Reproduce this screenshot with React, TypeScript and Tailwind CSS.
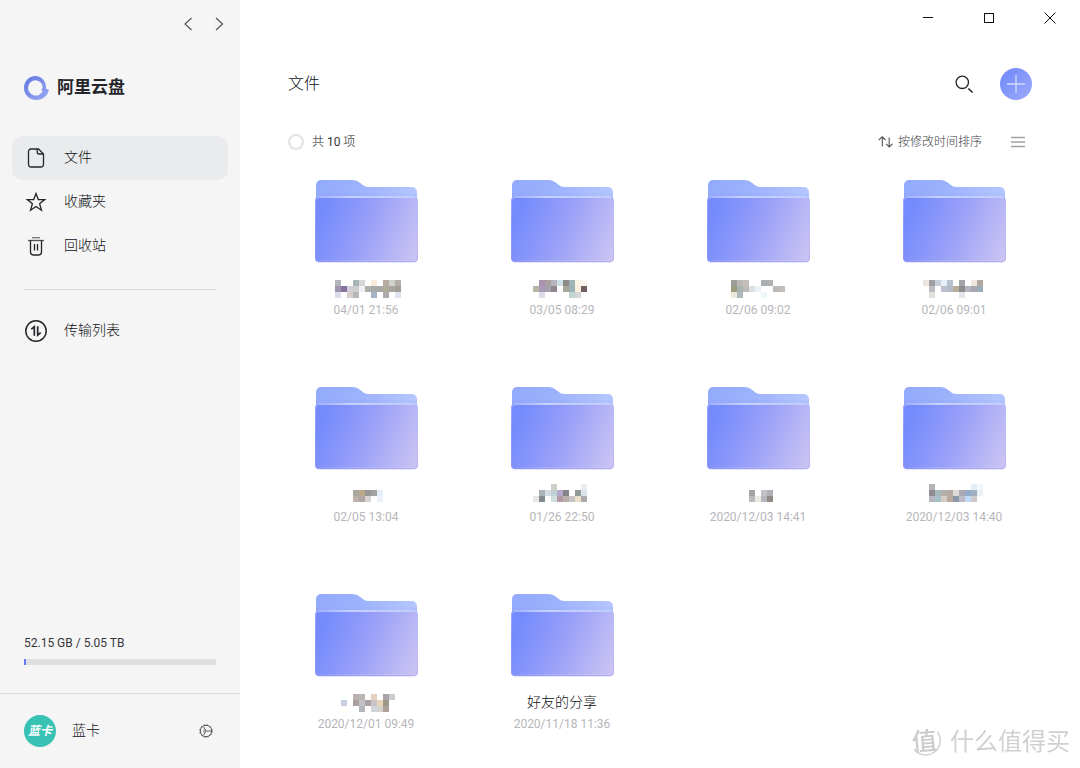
import type { ReactNode } from "react";

type Mosaic = { x: number; y: number; rows: (string | null)[][] };
type Item = { date: string; name?: string; mosaic?: Mosaic };

const _ = null;

const items: Item[] = [
  {
    date: "04/01 21:56",
    mosaic: {
      x: 29,
      y: 4,
      rows: [
        ["#b3b3ba", _, _, "#a9b4b9", "#d9d7d6", _, "#f9eadb", _, "#b8aaa3", "#cfd2c9", "#b5aeab"],
        ["#a195b0", "#8a72a0", "#cfcdd8", "#cdcdcd", "#f0f0f8", "#b0aeab", "#a7aaaa", "#a7a8a5", "#aeae9d", "#a9a49f", "#a39c99"],
        ["#dcdde8", _, "#d8cecd", "#b7b6b8", _, _, "#a4b4c4", _, "#b0a9ae", _, "#dfe5ef"],
      ],
    },
  },
  {
    date: "03/05 08:29",
    mosaic: {
      x: 31,
      y: 4,
      rows: [
        [_, "#aa92ad", "#aaa0a2", "#b8b4bd", "#cfdfe9", "#8c8b88", "#9eb4b7", "#fbf3e4", "#fbf5eb"],
        ["#b8b5a6", "#a99aba", "#a6a1af", "#8f858f", _, "#a7a69c", "#9bb3b6", "#fceedb", "#6d6060"],
        [_, "#dfdbe6", _, _, _, _, "#c4d3d6", "#d6d6d6", _],
      ],
    },
  },
  {
    date: "02/06 09:02",
    mosaic: {
      x: 33,
      y: 4,
      rows: [
        ["#9c9e97", "#bcb6b7", "#c5bfba", _, _, "#abaeb1", "#aeb0b1", _, _],
        ["#9c9c80", "#a7b3af", "#bcbcbd", "#dedfe0", "#eaf4f7", _, _, "#bcb9b7", "#c1bebc"],
        ["#ebe8dc", "#adb9ba", _, _, _, "#eff8fa", _, _, _],
      ],
    },
  },
  {
    date: "02/06 09:01",
    mosaic: {
      x: 29,
      y: 4,
      rows: [
        ["#ede5e0", "#a09da3", "#c6ced9", "#e4eff8", "#b8c2cc", _, "#a3a5a7", _, "#eee8e0", "#b0a79e"],
        [_, "#bdbcc1", _, "#bec1cb", "#b6bcc7", "#b9ad99", "#8d8d8e", "#b3b4bd", "#a6a9b3", "#9aadbd"],
        [_, "#e3dfdc", _, _, _, _, "#e4e6ea", _, _, _],
      ],
    },
  },
  {
    date: "02/05 13:04",
    mosaic: {
      x: 47,
      y: 7,
      rows: [
        ["#aaa9a0", "#bba98b", "#989793", "#a3a3a3", "#e6eef9"],
        ["#bdb0aa", "#afa6a4", "#d8d3d4", _, "#edf3fa"],
      ],
    },
  },
  {
    date: "01/26 22:50",
    mosaic: {
      x: 31,
      y: 1,
      rows: [
        [_, _, _, "#cdcfc9", _, _, _, _, "#e6ecef"],
        [_, "#aab3b8", "#d3dce1", "#c1d2d4", "#b6a8c9", "#858589", _, "#929b96", "#dce5ec"],
        ["#eae7e4", "#818a90", _, "#d3dfdd", "#b49aa6", "#b9b2ac", "#c9c4c4", "#eee0cc", "#adaaae"],
      ],
    },
  },
  {
    date: "2020/12/03 14:41",
    mosaic: {
      x: 51,
      y: 7,
      rows: [
        ["#a3a2a4", _, "#c2c2c9", "#b0b0b6"],
        ["#bbb9bf", "#ebece1", "#b5b5bd", "#908985"],
      ],
    },
  },
  {
    date: "2020/12/03 14:40",
    mosaic: {
      x: 35,
      y: 1,
      rows: [
        ["#b5b3b7", _, _, _, _, _, _, "#e5eef4", "#eff7fb"],
        ["#908b8c", "#a5b8bd", "#b2b0ab", "#b5aaa1", "#ded9d7", "#aba9b1", "#93abc9", "#a2afbf", "#e8f2f8"],
        ["#b8b7c0", "#a7bfc6", "#d5cdc5", "#b8a99a", "#8998aa", "#bcbac7", "#c0daf3", "#ccc9cb", _],
      ],
    },
  },
  {
    date: "2020/12/01 09:49",
    mosaic: {
      x: 35,
      y: 4,
      rows: [
        [_, _, "#bcb3b0", "#b8b7b5", _, "#e5d2bd", _, "#aca2aa", "#c9cdd2"],
        ["#c8d0df", _, "#aaa19f", "#c5c3ca", "#a9a1a4", "#c9c5c6", "#e8d4b8", "#999a8a", _],
        [_, _, _, "#b3b5bd", _, "#d1d5dc", "#d7d1cd", "#ada297", _],
      ],
    },
  },
  { date: "2020/11/18 11:36", name: "好友的分享" },
];

function Folder() {
  return (
    <svg width="104" height="84" viewBox="0 0 104 84" aria-hidden="true">
      <path
        d="M2 30V5a5 5 0 0 1 5-5H37.500c4 0 6.500 1 9.500 3.500C49.500 5.800 51 7 54.500 7H98a5 5 0 0 1 5 5v18z"
        fill="url(#folderBack)"
      />
      <rect x="2" y="13" width="101" height="5" fill="#7d8df8" opacity=".08" />
      <rect x="2" y="18" width="101" height="65" rx="4" fill="#b9b4ee" opacity=".35" />
      <rect x="1" y="17" width="103" height="65" rx="4" fill="url(#folderFront)" />
      <rect x="1.500" y="17.500" width="102" height="64" rx="3.500" fill="none" stroke="url(#folderEdge)" />
      <path d="M4 17h97" stroke="url(#folderShine)" strokeWidth="1.200" />
      <path d="M5 80.500h95" stroke="url(#folderShine)" strokeWidth="1" opacity=".2" />
    </svg>
  );
}

function FolderPaints() {
  return (
    <svg width="0" height="0" className="absolute" aria-hidden="true">
      <defs>
        <linearGradient id="folderBack" x1="0" y1="0" x2="1" y2="0.200">
          <stop offset="0" stopColor="#93a9fc" />
          <stop offset=".5" stopColor="#9db3fc" />
          <stop offset="1" stopColor="#b4c6fd" />
        </linearGradient>
        <linearGradient id="folderFront" gradientUnits="userSpaceOnUse" x1="8" y1="34" x2="102" y2="72">
          <stop offset="0" stopColor="#758bfd" />
          <stop offset=".45" stopColor="#989ff8" />
          <stop offset="1" stopColor="#c9c2f3" />
        </linearGradient>
        <linearGradient id="folderEdge" x1="0" y1="0" x2="0" y2="1">
          <stop offset="0" stopColor="#b4c3ff" stopOpacity=".6" />
          <stop offset=".5" stopColor="#a8b4fb" stopOpacity=".3" />
          <stop offset="1" stopColor="#9b9cf0" stopOpacity=".5" />
        </linearGradient>
        <linearGradient id="folderShine" gradientUnits="userSpaceOnUse" x1="0" y1="0" x2="104" y2="0">
          <stop offset="0" stopColor="#dbe4ff" stopOpacity=".2" />
          <stop offset=".35" stopColor="#f0f4ff" />
          <stop offset="1" stopColor="#e3eaff" stopOpacity=".6" />
        </linearGradient>
      </defs>
    </svg>
  );
}

function BlurredName({ mosaic }: { mosaic: Mosaic }) {
  return (
    <svg width="120" height="24" shapeRendering="crispEdges" role="img" aria-label="隐藏的名称">
      {mosaic.rows.map((row, r) =>
        row.map((fill, c) =>
          fill ? (
            <rect key={`${r}-${c}`} x={mosaic.x + c * 6} y={mosaic.y + r * 6} width="6" height="6" fill={fill} />
          ) : null,
        ),
      )}
    </svg>
  );
}

function FileCard({ item }: { item: Item }) {
  return (
    <li className="flex flex-col items-center">
      <Folder />
      <div className="mt-3 flex h-6 items-center text-sm text-[#0f1014]">
        {item.mosaic ? <BlurredName mosaic={item.mosaic} /> : item.name}
      </div>
      <time className="text-xs leading-5 font-normal text-[#b6b6ba]">{item.date}</time>
    </li>
  );
}

function NavItem({ icon, label, active = false }: { icon: ReactNode; label: string; active?: boolean }) {
  return (
    <a
      href="#"
      aria-current={active ? "page" : undefined}
      className={
        active
          ? "flex h-11 items-center gap-4 rounded-[10px] bg-[#eaebed] px-3 text-sm"
          : "flex h-11 items-center gap-4 rounded-[10px] px-3 text-sm"
      }
    >
      {icon}
      <span className="pb-0.5">{label}</span>
    </a>
  );
}

const iconProps = {
  width: 24,
  height: 24,
  viewBox: "0 0 24 24",
  fill: "none",
  stroke: "#25262b",
  strokeWidth: 1.3,
  "aria-hidden": true,
} as const;

const FileIcon = () => (
  <svg {...iconProps}>
    <path d="M7 3h7.500l5 5v10.500a2.500 2.500 0 0 1-2.500 2.500H7a2.500 2.500 0 0 1-2.500-2.500v-13A2.500 2.500 0 0 1 7 3z" />
    <path d="M13.200 3v3a2 2 0 0 0 2 2h4.200" />
  </svg>
);

const StarIcon = () => (
  <svg {...iconProps}>
    <path d="m12 3.600 2.300 6h6.400l-5.100 4.100 1.900 6.600-5.500-3.800-5.500 3.800 1.900-6.600-5.100-4.100h6.400z" />
  </svg>
);

const TrashIcon = () => (
  <svg {...iconProps}>
    <path d="M8 3.700h8" stroke="#777" />
    <path d="M4 6.500h16" stroke="#555" />
    <path d="M6.500 6.500v11.500a3 3 0 0 0 3 3h5a3 3 0 0 0 3-3V6.500M10.500 10v6.500M13.500 10v6.500" />
  </svg>
);

const TransferIcon = () => (
  <svg {...iconProps}>
    <circle cx="12" cy="12" r="10.200" strokeWidth="1.500" />
    <path d="M7.300 10.200 10.300 7.800v9M13.700 7.200v8.900l3-2.500" strokeWidth="1.700" />
  </svg>
);

export default function App() {
  return (
    <div className="flex min-h-screen bg-white font-[Roboto,'Noto_Sans_CJK_SC',sans-serif] font-light text-[#0f1014]">
      <FolderPaints />
      <aside className="flex w-60 shrink-0 flex-col bg-[#f5f5f5]">
        <div className="flex h-12 items-center justify-end gap-[15px] pr-[13px]">
          <button type="button" aria-label="后退">
            <svg width="16" height="16" fill="none" stroke="#555" strokeWidth="1.200">
              <path d="M11.500 2 5 8l6.500 6" />
            </svg>
          </button>
          <button type="button" aria-label="前进">
            <svg width="16" height="16" fill="none" stroke="#555" strokeWidth="1.200">
              <path d="m5 2 6.500 6L5 14" />
            </svg>
          </button>
        </div>

        <div className="flex h-20 items-center gap-2 pl-6">
          <svg width="25" height="24" viewBox="0 0 25 24" aria-hidden="true">
            <defs>
              <linearGradient id="brand" x1="0" y1="0" x2="1" y2="1">
                <stop offset="0" stopColor="#5f76e0" />
                <stop offset="1" stopColor="#9dabf5" />
              </linearGradient>
            </defs>
            <path
              fill="url(#brand)"
              fillRule="evenodd"
              d="M22 12.300C22.400 5 17.500 0 11.500 0 5 0 0 5.200 0 12c0 6.800 5.300 12 12.300 12C19 24 24 19.800 25 13.300c-1 .4-2 .3-3-1zM11.500 4.200a7.500 7.500 0 0 1 7.200 7.800l-1.100 1.100c-.2 1.200.4 1.800 1.100 2.100a7.700 7.700 0 1 1-7.200-11z"
            />
          </svg>
          <span className="text-[17px] font-bold text-[#25262b]">阿里云盘</span>
        </div>

        <nav className="mt-2 px-3">
          <NavItem icon={<FileIcon />} label="文件" active />
          <NavItem icon={<StarIcon />} label="收藏夹" />
          <NavItem icon={<TrashIcon />} label="回收站" />
          <hr className="mx-3 mt-[21px] mb-[19px] border-[#dcdcde]" />
          <NavItem icon={<TransferIcon />} label="传输列表" />
        </nav>

        <div className="mt-auto mb-7 px-6">
          <p id="quota" className="text-xs leading-5 font-normal text-[#35363b]">
            52.15 GB / 5.05 TB
          </p>
          <div
            role="progressbar"
            aria-labelledby="quota"
            aria-valuenow={1}
            aria-valuemin={0}
            aria-valuemax={100}
            className="mt-1.5 h-1.5 bg-[#dfdfdf]"
          >
            <div className="h-full bg-[#637dff]" style={{ width: `${(52.15 / 5171.2) * 100}%` }} />
          </div>
        </div>

        <footer className="flex h-[75px] items-center border-t border-[#dcdcde] px-6">
          <span className="flex size-8 items-center justify-center rounded-full bg-[#37c2b4] text-[12px] font-bold text-white italic">
            蓝卡
          </span>
          <span className="ml-4 pb-0.5 text-sm">蓝卡</span>
          <button type="button" aria-label="设置" className="ml-auto">
            <svg width="20" height="20" viewBox="0 0 20 20" fill="none" stroke="#555" strokeWidth="1">
              <circle cx="10" cy="10" r="5.700" />
              <circle cx="10" cy="10" r="6.300" strokeDasharray="1.650 1.650" strokeWidth=".8" />
              <path d="M7.800 6 10 10l-2.200 4M10 10h6.200M8 8.500v3" strokeWidth=".9" />
            </svg>
          </button>
        </footer>
      </aside>

      <main className="flex min-w-0 flex-1 flex-col">
        <div className="flex h-9 items-center justify-end gap-[45px] pr-[22px]">
          <button type="button" aria-label="最小化">
            <svg width="16" height="16" stroke="#111" shapeRendering="crispEdges">
              <path d="M3 7.500h10" />
            </svg>
          </button>
          <button type="button" aria-label="最大化">
            <svg width="16" height="16" fill="none" stroke="#111" shapeRendering="crispEdges">
              <path d="M3.500 3.500h9v9h-9z" />
            </svg>
          </button>
          <button type="button" aria-label="关闭">
            <svg width="16" height="16" stroke="#111" strokeWidth="1">
              <path d="m2.500 2.500 11 11M13.500 2.500l-11 11" />
            </svg>
          </button>
        </div>

        <header className="flex h-24 items-center px-12">
          <h1 className="text-base font-light">文件</h1>
          <button type="button" aria-label="搜索" className="mr-6 ml-auto">
            <svg width="24" height="24" fill="none" stroke="#25262b" strokeWidth="1.300">
              <circle cx="10.300" cy="10.300" r="6.200" />
              <path d="m16.300 16.500 4.300 4" strokeWidth="1.600" />
            </svg>
          </button>
          <button
            type="button"
            aria-label="添加"
            className="flex size-8 items-center justify-center rounded-full bg-linear-to-br from-[#6f86f8] to-[#9dabfb]"
          >
            <svg width="18" height="18" stroke="#d3dbff" strokeWidth="1.300">
              <path d="M9 0v18M0 9h18" />
            </svg>
          </button>
        </header>

        <div className="flex h-5 items-center px-12 text-xs">
          <label className="flex items-center gap-2">
            <input type="checkbox" className="size-4 appearance-none rounded-full border-2 border-[#e3e3e5] bg-white" />
            <span>
              共 <span className="font-normal text-[#35363b]">10</span> 项
            </span>
          </label>
          <button type="button" className="ml-auto flex items-center gap-1 text-[#404046]">
            <svg width="16" height="16" fill="none" stroke="#55565c" strokeWidth="1.100">
              <path d="M.8 6 4.300 2.700 7.500 6M4.300 3v9.500M8 9.800l3.200 3.200 3.300-3.200M11.200 13V3.500" />
            </svg>
            按修改时间排序
          </button>
          <button type="button" aria-label="切换列表视图" className="mr-[6px] ml-7">
            <svg width="16" height="16" stroke="#a2a2a6" strokeWidth="1.300">
              <path d="M1 3.500h14M1 8h14M1 12.500h14" />
            </svg>
          </button>
        </div>

        <ul className="mt-7 grid grid-cols-4 gap-y-[67px] px-7 pb-8">
          {items.map((item) => (
            <FileCard key={item.date} item={item} />
          ))}
        </ul>
      </main>

      <div className="pointer-events-none fixed right-2.5 bottom-2.5 flex items-center gap-2 font-normal text-[#d0d0d0]">
        <svg width="32" height="32" viewBox="0 0 32 32" fill="none" aria-hidden="true">
          <path d="M27.500 6A14.500 14.500 0 1 1 4 23" stroke="#d2d2d2" strokeWidth="1.500" />
          <text x="2" y="24" fontSize="25" fontWeight="500" fill="#cbcbcb" transform="rotate(-5 16 16)">
            值
          </text>
        </svg>
        <span className="text-2xl leading-8">什么值得买</span>
      </div>
    </div>
  );
}
